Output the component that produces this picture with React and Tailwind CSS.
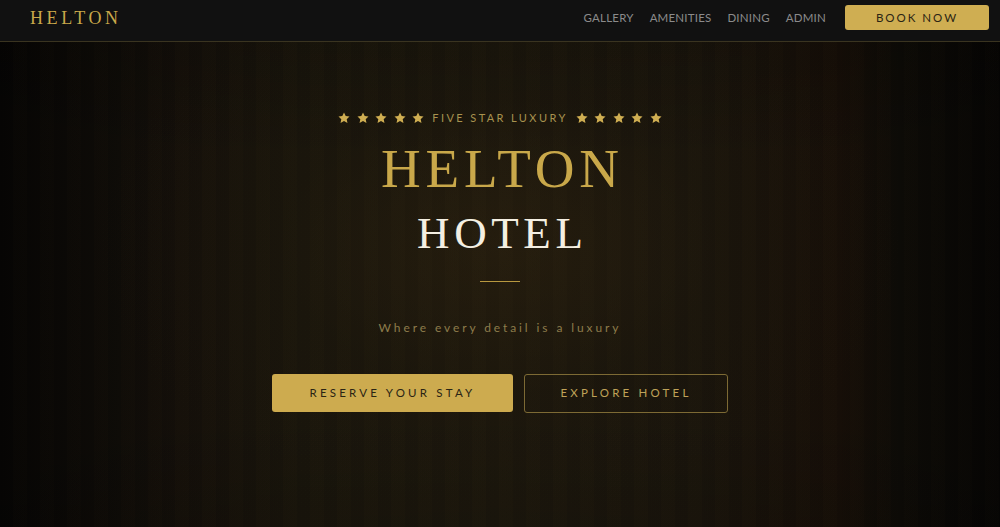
import React from "react";

const serif = "font-['Liberation_Serif','DejaVu_Serif',serif]";
const sans = "font-['Lato','Open_Sans',sans-serif]";

function Star() {
  return (
    <svg viewBox="0 0 24 24" className="w-[12px] h-[12px]" fill="#cfae52">
      <path d="M12 1l3.4 7.2 7.6.9-5.6 5.3 1.5 7.6L12 18.2 5.1 22l1.5-7.6L1 9.1l7.6-.9z" />
    </svg>
  );
}

function Stars() {
  return (
    <div className="flex items-center gap-[6.5px]">
      {[0, 1, 2, 3, 4].map((i) => (
        <Star key={i} />
      ))}
    </div>
  );
}

export default function App() {
  const links = ["Gallery", "Amenities", "Dining", "Admin"];

  return (
    <div className={`w-[1000px] h-[527px] overflow-hidden bg-[#0a0806] ${sans}`}>
      {/* Nav */}
      <nav className="h-[42px] flex items-center justify-between pl-[30px] pr-[11px] pb-[6px] bg-[#111111] border-b border-[#3a3420]">
        <div className={`${serif} text-[#c9a84a] text-[18px] tracking-[3.6px] leading-none`}>HELTON</div>
        <div className="flex items-center">
          <div className="flex items-center gap-[16px] mr-[19px]">
            {links.map((l) => (
              <a key={l} className="uppercase text-[11.5px] text-[#8b8b8b] tracking-[0.2px]">
                {l}
              </a>
            ))}
          </div>
          <button className="w-[144px] h-[25px] rounded-[3px] bg-[#cfae52] text-[#2a2414] text-[11.5px] tracking-[2px] uppercase">
            Book Now
          </button>
        </div>
      </nav>

      {/* Hero */}
      <section className="relative h-[485px] bg-[linear-gradient(90deg,#060504_0%,#0f0c08_12%,#15100a_18%,#1a160c_30%,#1d180d_50%,#1a150c_70%,#170f08_84%,#0d0b07_90%,#060504_100%)]">
        <div className="absolute inset-0 bg-[radial-gradient(ellipse_40%_55%_at_50%_42%,rgba(45,34,16,0.55)_0%,rgba(30,24,12,0.25)_55%,rgba(0,0,0,0)_100%)]" />
        <div className="absolute inset-0 bg-[linear-gradient(180deg,rgba(0,0,0,0.15)_0%,rgba(0,0,0,0)_25%,rgba(0,0,0,0)_75%,rgba(0,0,0,0.1)_100%)]" />
        <div className="absolute inset-0 opacity-[0.04] bg-[repeating-linear-gradient(90deg,#000_0px,#000_13px,#3a2c14_13px,#3a2c14_27px)]" />

        <div className="relative flex flex-col items-center pt-[68px]">
          <div className="flex items-center gap-[8px]">
            <Stars />
            <span className="text-[11px] tracking-[2.4px] text-[#a8924f] uppercase">Five Star Luxury</span>
            <Stars />
          </div>

          <h1 className={`${serif} mt-[14px] text-[#c9a84a] text-[55px] leading-[56px] tracking-[4.8px] pl-[4.8px]`}>
            HELTON
          </h1>
          <h2 className={`${serif} mt-[13px] text-[#f4efe2] text-[45px] leading-[46px] tracking-[4.6px] pl-[4.6px]`}>
            HOTEL
          </h2>

          <div className="mt-[25px] w-[40px] h-px bg-[#b8983f]" />

          <p className="mt-[37px] text-[12px] tracking-[2.9px] text-[#8d7c4b]">Where every detail is a luxury</p>

          <div className="mt-[37px] flex gap-[11px]">
            <button className="w-[241px] h-[38px] rounded-[3px] bg-[#cdab4f] text-[#2a2414] text-[11.5px] tracking-[3.2px] uppercase">
              Reserve Your Stay
            </button>
            <button className="w-[204px] h-[39px] rounded-[3px] border border-[#7d6a34] text-[#bfa258] text-[11.5px] tracking-[3.2px] uppercase">
              Explore Hotel
            </button>
          </div>
        </div>
      </section>
    </div>
  );
}
